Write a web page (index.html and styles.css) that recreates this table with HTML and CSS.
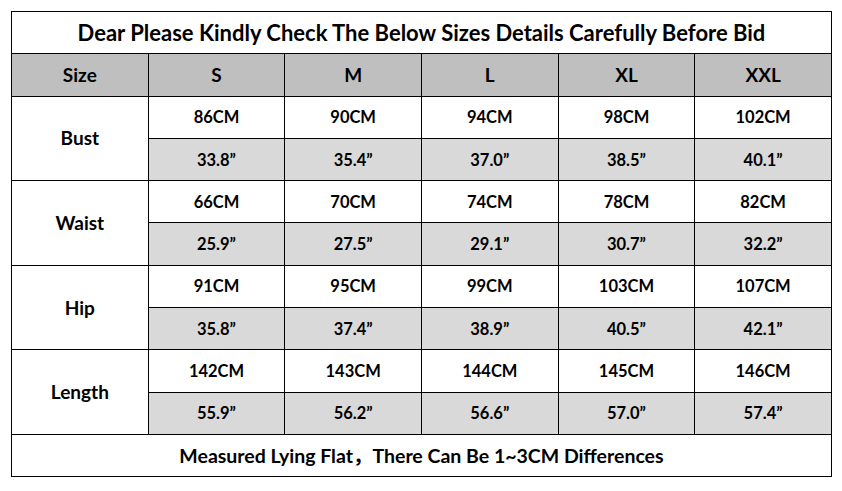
FILE: index.html
```html
<!DOCTYPE html>
<html>
<head>
<meta charset="utf-8">
<link rel="stylesheet" href="styles.css">
</head>
<body>
<table class="sizes">
  <colgroup>
    <col class="c"><col class="c"><col class="c"><col class="c"><col class="c"><col class="c">
  </colgroup>
  <tr class="title"><td colspan="6">Dear Please Kindly Check The Below Sizes Details Carefully Before Bid</td></tr>
  <tr class="head"><td>Size</td><td>S</td><td>M</td><td>L</td><td>XL</td><td>XXL</td></tr>
  <tr><td rowspan="2" class="label">Bust</td><td>86CM</td><td>90CM</td><td>94CM</td><td>98CM</td><td>102CM</td></tr>
  <tr class="alt"><td>33.8”</td><td>35.4”</td><td>37.0”</td><td>38.5”</td><td>40.1”</td></tr>
  <tr><td rowspan="2" class="label">Waist</td><td>66CM</td><td>70CM</td><td>74CM</td><td>78CM</td><td>82CM</td></tr>
  <tr class="alt"><td>25.9”</td><td>27.5”</td><td>29.1”</td><td>30.7”</td><td>32.2”</td></tr>
  <tr><td rowspan="2" class="label">Hip</td><td>91CM</td><td>95CM</td><td>99CM</td><td>103CM</td><td>107CM</td></tr>
  <tr class="alt"><td>35.8”</td><td>37.4”</td><td>38.9”</td><td>40.5”</td><td>42.1”</td></tr>
  <tr><td rowspan="2" class="label">Length</td><td>142CM</td><td>143CM</td><td>144CM</td><td>145CM</td><td>146CM</td></tr>
  <tr class="alt"><td>55.9”</td><td>56.2”</td><td>56.6”</td><td>57.0”</td><td>57.4”</td></tr>
  <tr class="foot"><td colspan="6">Measured Lying Flat，There Can Be 1~3CM Differences</td></tr>
</table>
</body>
</html>
```
FILE: styles.css
```css
html, body {
  margin: 0;
  padding: 0;
  background: #ffffff;
}
body {
  padding: 11px 0 0 11px;
  font-family: Lato, "Noto Sans CJK SC", sans-serif;
  font-weight: 700;
  color: #000;
}
.sizes {
  border-collapse: collapse;
  table-layout: fixed;
  width: 820px;
}
.sizes .c {
  width: 136.67px;
}
.sizes td {
  border: 1px solid #000;
  height: 41.3px;
  padding: 0;
  text-align: center;
  vertical-align: middle;
  font-size: 16.5px;
  line-height: 20px;
}
.sizes .title td {
  font-size: 22px;
}
.sizes .head td {
  background: #bfbfbf;
  font-size: 19px;
}
.sizes .alt td {
  background: #d9d9d9;
}
.sizes td.label {
  background: #fff;
  font-size: 19px;
}
.sizes .foot td {
  font-size: 19.5px;
}
```
